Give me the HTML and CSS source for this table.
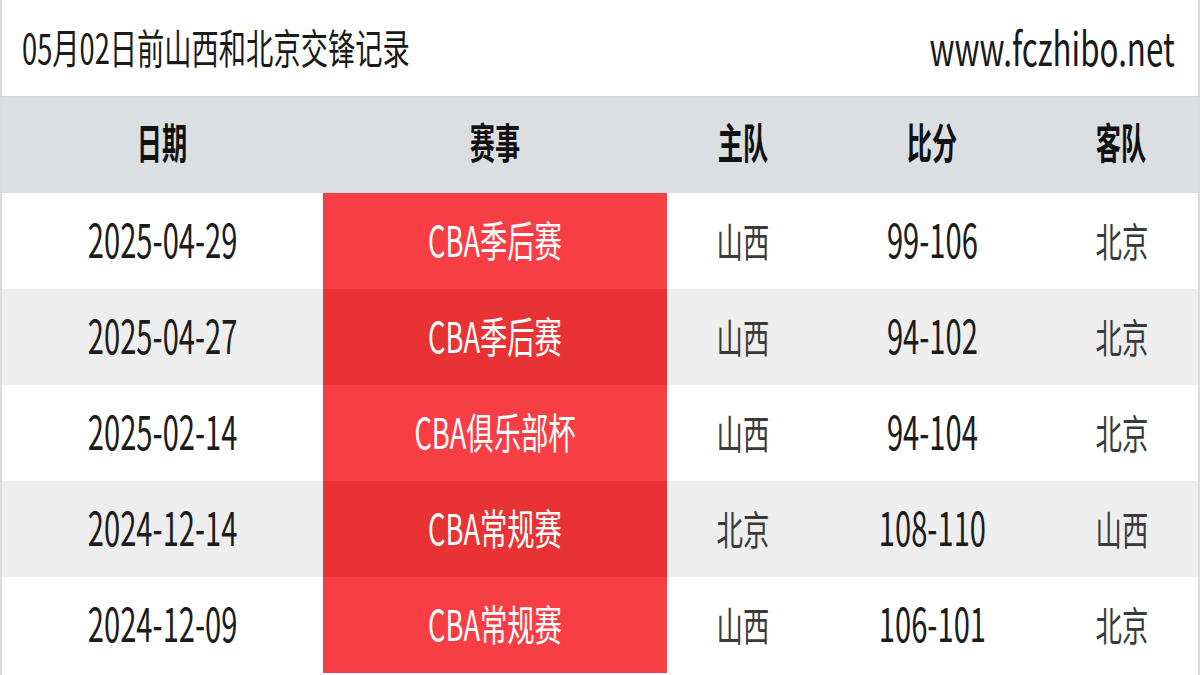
FILE: index.html
```html
<!DOCTYPE html>
<html lang="zh-CN">
<head>
<meta charset="utf-8">
<title>05月02日前山西和北京交锋记录</title>
<link rel="stylesheet" href="styles.css">
</head>
<body>
<div class="page">
  <header class="top">
    <span class="title"><span class="sx">05月02日前山西和北京交锋记录</span></span>
    <span class="site"><span class="sx">www.fczhibo.net</span></span>
  </header>
  <div class="table">
    <div class="row head">
      <div class="cell"><span class="sx">日期</span></div>
      <div class="cell"><span class="sx">赛事</span></div>
      <div class="cell"><span class="sx">主队</span></div>
      <div class="cell"><span class="sx">比分</span></div>
      <div class="cell"><span class="sx">客队</span></div>
    </div>
    <div class="row odd">
      <div class="cell num"><span class="sx">2025-04-29</span></div>
      <div class="cell event"><span class="sx">CBA季后赛</span></div>
      <div class="cell team"><span class="sx">山西</span></div>
      <div class="cell num"><span class="sx">99-106</span></div>
      <div class="cell team"><span class="sx">北京</span></div>
    </div>
    <div class="row even">
      <div class="cell num"><span class="sx">2025-04-27</span></div>
      <div class="cell event"><span class="sx">CBA季后赛</span></div>
      <div class="cell team"><span class="sx">山西</span></div>
      <div class="cell num"><span class="sx">94-102</span></div>
      <div class="cell team"><span class="sx">北京</span></div>
    </div>
    <div class="row odd">
      <div class="cell num"><span class="sx">2025-02-14</span></div>
      <div class="cell event"><span class="sx">CBA俱乐部杯</span></div>
      <div class="cell team"><span class="sx">山西</span></div>
      <div class="cell num"><span class="sx">94-104</span></div>
      <div class="cell team"><span class="sx">北京</span></div>
    </div>
    <div class="row even">
      <div class="cell num"><span class="sx">2024-12-14</span></div>
      <div class="cell event"><span class="sx">CBA常规赛</span></div>
      <div class="cell team"><span class="sx">北京</span></div>
      <div class="cell num"><span class="sx">108-110</span></div>
      <div class="cell team"><span class="sx">山西</span></div>
    </div>
    <div class="row odd">
      <div class="cell num"><span class="sx">2024-12-09</span></div>
      <div class="cell event"><span class="sx">CBA常规赛</span></div>
      <div class="cell team"><span class="sx">山西</span></div>
      <div class="cell num"><span class="sx">106-101</span></div>
      <div class="cell team"><span class="sx">北京</span></div>
    </div>
  </div>
</div>
</body>
</html>
```

FILE: styles.css
```css
html, body {
  margin: 0;
  padding: 0;
  background: #ffffff;
}
body {
  width: 1200px;
  height: 675px;
  overflow: hidden;
  font-family: "Noto Sans CJK SC", "Noto Sans", sans-serif;
  color: #1e1e1e;
}
.page {
  width: 1196px;
  height: 675px;
  border-left: 2px solid #dcdcdc;
  border-right: 2px solid #dcdcdc;
  display: flex;
  flex-direction: column;
}
.sx {
  display: inline-block;
  white-space: nowrap;
}
.top {
  height: 97px;
  flex: none;
  box-sizing: border-box;
  padding-bottom: 4px;
  display: flex;
  align-items: center;
  justify-content: space-between;
  border-bottom: 1px solid #d6d9dc;
}
.title {
  padding-left: 20px;
  font-size: 41px;
  line-height: 1;
  color: #1a1a1a;
}
.title .sx {
  transform: scaleX(0.665);
  transform-origin: left center;
}
.site {
  padding-right: 23px;
  font-size: 46px;
  line-height: 1;
  color: #1a1a1a;
}
.site .sx {
  transform: scaleX(0.68);
  transform-origin: right center;
}
.table {
  display: flex;
  flex-direction: column;
}
.row {
  display: grid;
  grid-template-columns: 321px 344px 152px 226px 153px;
  height: 96px;
  flex: none;
}
.cell {
  display: flex;
  align-items: center;
  justify-content: center;
  box-sizing: border-box;
  padding-bottom: 2px;
  line-height: 1;
  font-size: 40px;
}
.cell .sx {
  transform: scaleX(0.66);
}
.head {
  background: #dcdfe2;
}
.head .cell {
  font-weight: bold;
  font-size: 42px;
  color: #111;
  padding-bottom: 8px;
}
.head .cell .sx {
  transform: scaleX(0.6);
}
.odd {
  background: #ffffff;
}
.even {
  background: #eeeeee;
}
.num {
  font-size: 47px;
  color: #1c1c1c;
}
.cell.num {
  padding-bottom: 7px;
}
.cell.num .sx {
  transform: scaleX(0.62);
}
.team {
  color: #3a3a3a;
}
.event {
  color: #ffffff;
  font-size: 42px;
}
.cell.event {
  padding-bottom: 4px;
}
.cell.event .sx {
  transform: scaleX(0.65);
}
.odd .event {
  background: #f73e45;
}
.even .event {
  background: #e83234;
}
```
